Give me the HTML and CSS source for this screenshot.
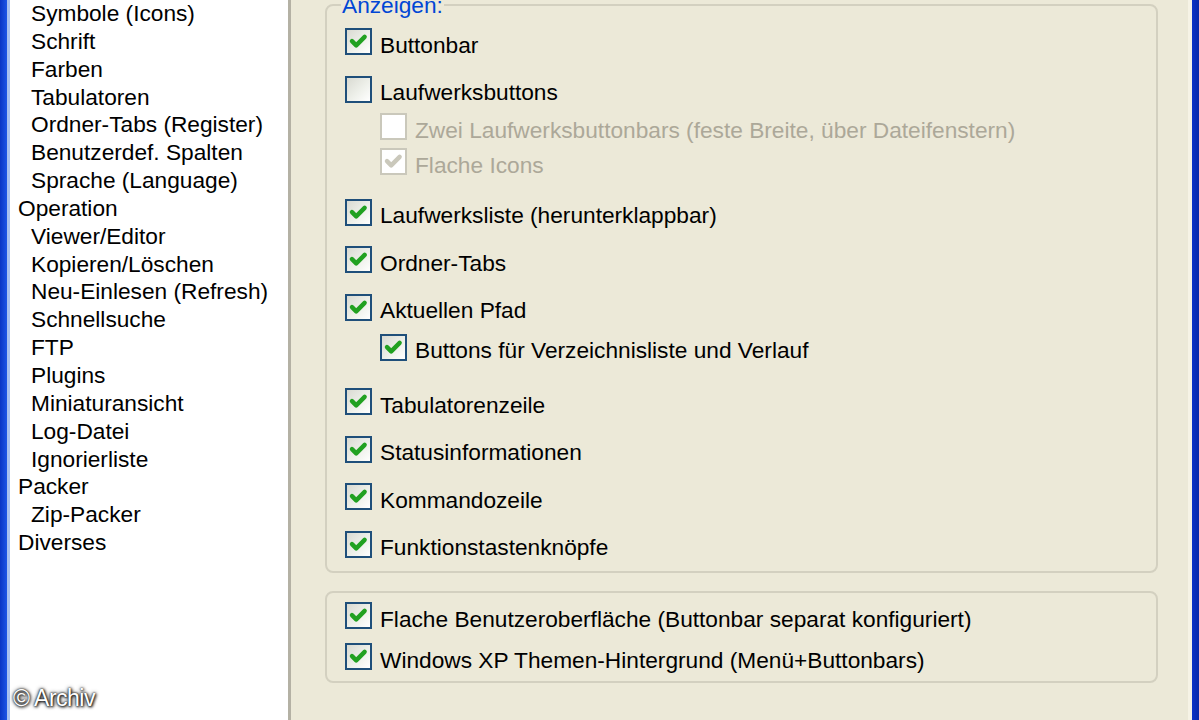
FILE: index.html
```html
<!DOCTYPE html>
<html>
<head>
    <title> Einstellungen: Layout </title>
    <link rel="stylesheet" href="styles.css">
</head>
<body>
    <div class="window">
        <div class="frame-left"></div>

        <ul class="tree">
            <li class="child">Symbole (Icons)</li>
            <li class="child">Schrift</li>
            <li class="child">Farben</li>
            <li class="child">Tabulatoren</li>
            <li class="child">Ordner-Tabs (Register)</li>
            <li class="child">Benutzerdef. Spalten</li>
            <li class="child">Sprache (Language)</li>
            <li>Operation</li>
            <li class="child">Viewer/Editor</li>
            <li class="child">Kopieren/Löschen</li>
            <li class="child">Neu-Einlesen (Refresh)</li>
            <li class="child">Schnellsuche</li>
            <li class="child">FTP</li>
            <li class="child">Plugins</li>
            <li class="child">Miniaturansicht</li>
            <li class="child">Log-Datei</li>
            <li class="child">Ignorierliste</li>
            <li>Packer</li>
            <li class="child">Zip-Packer</li>
            <li>Diverses</li>
        </ul>

        <main class="page">
            <fieldset class="group group-show">
                <legend>Anzeigen:</legend>

                <div class="check"><span class="box on"><svg viewBox="0 0 12 12"><polyline points="2.6,5.8 4.8,8 9.2,3.6"/></svg></span><span class="label">Buttonbar</span></div>
                <div class="check"><span class="box"></span><span class="label">Laufwerksbuttons</span></div>

                <div class="sub sub-drives">
                    <div class="check disabled"><span class="box"></span><span class="label">Zwei Laufwerksbuttonbars (feste Breite, über Dateifenstern)</span></div>
                    <div class="check disabled"><span class="box on"><svg viewBox="0 0 12 12"><polyline points="2.6,5.8 4.8,8 9.2,3.6"/></svg></span><span class="label">Flache Icons</span></div>
                </div>

                <div class="check"><span class="box on"><svg viewBox="0 0 12 12"><polyline points="2.6,5.8 4.8,8 9.2,3.6"/></svg></span><span class="label">Laufwerksliste (herunterklappbar)</span></div>
                <div class="check"><span class="box on"><svg viewBox="0 0 12 12"><polyline points="2.6,5.8 4.8,8 9.2,3.6"/></svg></span><span class="label">Ordner-Tabs</span></div>
                <div class="check"><span class="box on"><svg viewBox="0 0 12 12"><polyline points="2.6,5.8 4.8,8 9.2,3.6"/></svg></span><span class="label">Aktuellen Pfad</span></div>

                <div class="sub sub-path">
                    <div class="check"><span class="box on"><svg viewBox="0 0 12 12"><polyline points="2.6,5.8 4.8,8 9.2,3.6"/></svg></span><span class="label">Buttons für Verzeichnisliste und Verlauf</span></div>
                </div>

                <div class="check"><span class="box on"><svg viewBox="0 0 12 12"><polyline points="2.6,5.8 4.8,8 9.2,3.6"/></svg></span><span class="label">Tabulatorenzeile</span></div>
                <div class="check"><span class="box on"><svg viewBox="0 0 12 12"><polyline points="2.6,5.8 4.8,8 9.2,3.6"/></svg></span><span class="label">Statusinformationen</span></div>
                <div class="check"><span class="box on"><svg viewBox="0 0 12 12"><polyline points="2.6,5.8 4.8,8 9.2,3.6"/></svg></span><span class="label">Kommandozeile</span></div>
                <div class="check"><span class="box on"><svg viewBox="0 0 12 12"><polyline points="2.6,5.8 4.8,8 9.2,3.6"/></svg></span><span class="label">Funktionstastenknöpfe</span></div>
            </fieldset>

            <fieldset class="group group-look">
                <div class="check"><span class="box on"><svg viewBox="0 0 12 12"><polyline points="2.6,5.8 4.8,8 9.2,3.6"/></svg></span><span class="label">Flache Benutzeroberfläche (Buttonbar separat konfiguriert)</span></div>
                <div class="check"><span class="box on"><svg viewBox="0 0 12 12"><polyline points="2.6,5.8 4.8,8 9.2,3.6"/></svg></span><span class="label">Windows XP Themen-Hintergrund (Menü+Buttonbars)</span></div>
            </fieldset>
        </main>

        <div class="frame-right"></div>
    </div>

    <div class="watermark">© Archiv</div>
</body>
</html>
```

FILE: styles.css
```css
body {
    margin: 0;
    font-family: "Liberation Sans", Arial, sans-serif;
    font-size: 22.7px;
    color: #000;
    background-color: #ece9d8;
}

.window {
    display: flex;
    width: 1199px;
    height: 720px;
    overflow: hidden;
}

/* Fensterrahmen links und rechts (XP blau) */
.frame-left {
    width: 7px;
    flex-shrink: 0;
    background: linear-gradient(to right, #0a35c4, #1d55e6);
    border-right: 3px solid #a9c1ef;
}

.frame-right {
    width: 7px;
    flex-shrink: 0;
    background: linear-gradient(to right, #0c33c8, #0a2aa8);
    border-left: 4px solid #f6f3e6;
}

/* Baum links */
.tree {
    list-style: none;
    margin: 0;
    padding: 0 0 0 8px;
    width: 270px;
    flex-shrink: 0;
    background-color: #fff;
    border-right: 3px solid #b4b1a4;
    line-height: 27.85px;
    white-space: nowrap;
}

.tree .child {
    padding-left: 13px;
}

/* Rechte Seite */
.page {
    flex: 1;
    padding: 0 30px 0 34px;
    background-color: #ece9d8;
}

.group {
    margin: 0;
    min-width: 0;
    border: 2px solid #d3d0c0;
    border-radius: 8px;
    display: flex;
    flex-direction: column;
    gap: 20.5px;
}

.group-show {
    margin-top: -7px;
    padding: 11px 0 13.5px 18px;
}

.group legend {
    color: #0046d5;
    line-height: 24px;
    padding: 0 1px;
    margin-left: -4px;
}

.group-look {
    margin-top: 18px;
    padding: 9px 0 11px 18px;
    gap: 14px;
}

.check {
    display: flex;
    align-items: center;
    gap: 8px;
    height: 27px;
    white-space: nowrap;
}

.check .label {
    margin-top: 6px;
    line-height: 24px;
}

.box {
    width: 27px;
    height: 27px;
    box-sizing: border-box;
    flex-shrink: 0;
    border: 2px solid #1f4f7a;
    background: linear-gradient(135deg, #d9dad2 0%, #eef0ea 55%, #ffffff 100%);
}

.box svg {
    display: block;
    width: 23px;
    height: 23px;
}

.box polyline {
    fill: none;
    stroke: #21a121;
    stroke-width: 2.3;
    stroke-linecap: round;
    stroke-linejoin: round;
}

.disabled {
    color: #aca899;
}

.disabled .box {
    border-color: #cac8bb;
    background: #fff;
}

.disabled .box polyline {
    stroke: #cac8bb;
}

.sub {
    display: flex;
    flex-direction: column;
    gap: 8px;
    padding-left: 35px;
}

.sub-drives {
    margin-top: -10px;
    margin-bottom: 3px;
}

.sub-path {
    margin-top: -7.5px;
    margin-bottom: 7px;
}

/* Bildnachweis unten links */
.watermark {
    position: absolute;
    left: 13px;
    top: 686px;
    font-size: 23px;
    line-height: 24px;
    color: #fff;
    letter-spacing: -0.5px;
    text-shadow: 0 0 2px #000, 0 0 4px #333, 1px 1px 3px #000;
}
```
